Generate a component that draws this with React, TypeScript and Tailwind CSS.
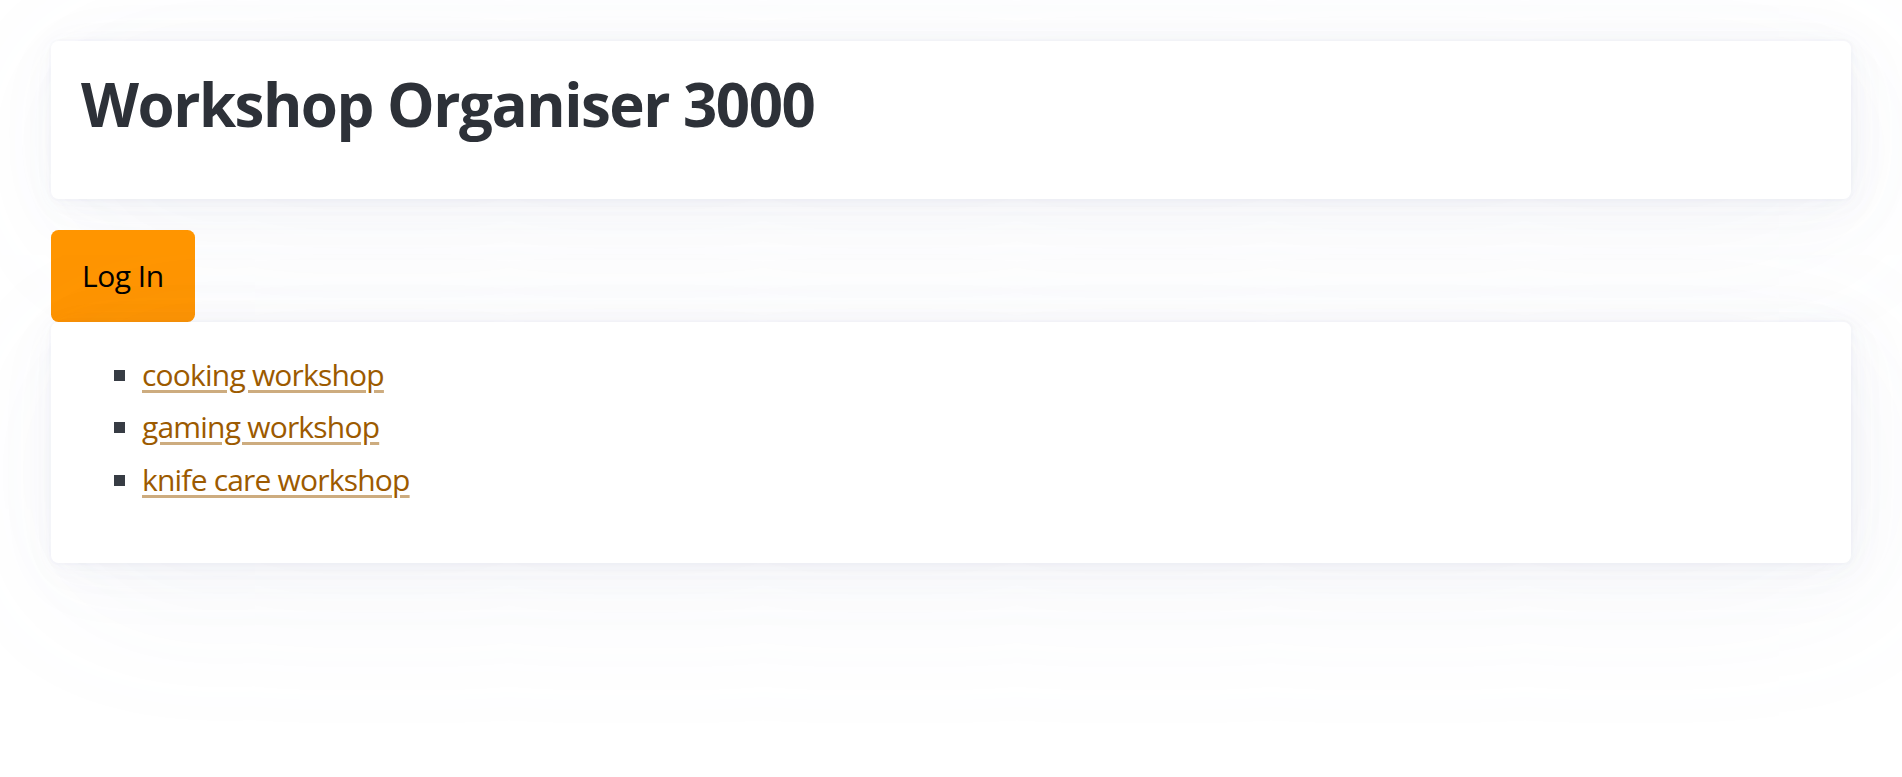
import React from "react";

const workshops = ["cooking workshop", "gaming workshop", "knife care workshop"];

const cardShadow =
  "shadow-[0.4px_0.9px_5.2px_rgba(129,145,181,0.017),1px_2px_12px_rgba(129,145,181,0.024),1.9px_3.75px_22.5px_rgba(129,145,181,0.03),3.4px_6.75px_40.5px_rgba(129,145,181,0.036),6.3px_12.5px_75px_rgba(129,145,181,0.043),15px_30px_180px_rgba(129,145,181,0.06),0_0_0_1.9px_rgba(129,145,181,0.015)]";

const App: React.FC = () => {
  return (
    <div className="min-h-screen bg-white font-['Segoe_UI','Open_Sans',sans-serif] text-[30px] leading-[1.5] text-[#373c44]">
      <main className="px-[51px] pt-[41px]">
        <article className={`rounded-[7.5px] bg-white px-[30px] pt-[30px] pb-[60px] ${cardShadow}`}>
          <h1 className="text-[60px] leading-[1.125] font-bold tracking-[-1.5px] text-[#2d3138]">
            Workshop Organiser 3000
          </h1>
        </article>

        <button className="mt-[31px] block rounded-[7.5px] bg-[#ff9500] px-[31px] py-[23.5px] text-[30px] leading-[45px] tracking-[-0.5px] text-black">
          Log In
        </button>

        <article className={`rounded-[7.5px] bg-white p-[30px] ${cardShadow}`}>
          <ul className="mb-[31px] list-[square] pl-[61px] marker:text-[#373c44]">
            {workshops.map((name) => (
              <li key={name} className="mb-[7.5px] leading-[45px]">
                <a
                  href="#"
                  className="tracking-[-0.8px] text-[#9c5a00] underline decoration-[rgba(156,90,0,0.5)] underline-offset-[4px]"
                >
                  {name}
                </a>
              </li>
            ))}
          </ul>
        </article>
      </main>
    </div>
  );
};

export default App;
